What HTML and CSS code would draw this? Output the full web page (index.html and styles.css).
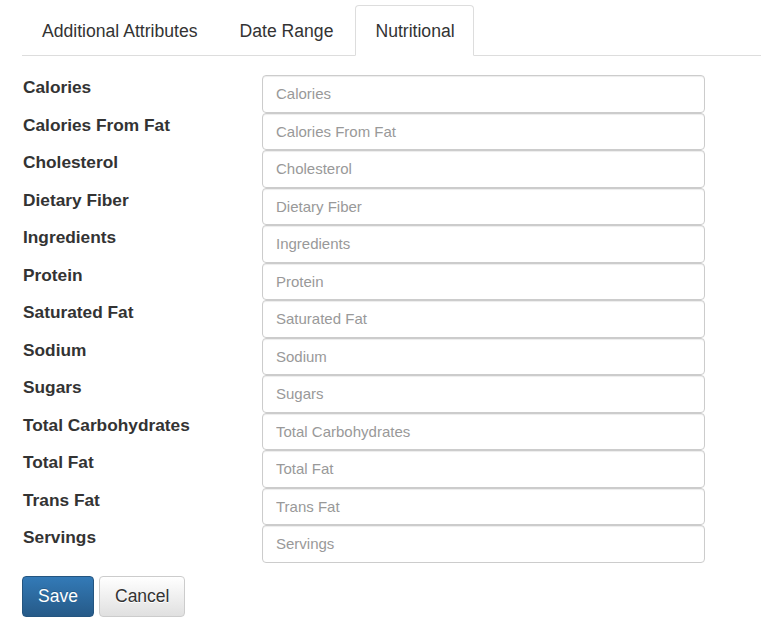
FILE: index.html
```html
<!doctype html>
<html>

<head>
    <meta charset="utf-8">
    <title>Nutritional</title>
    <link rel="stylesheet" href="styles.css">
</head>

<body>
    <ul class="tabs">
        <li><a href="#attributes">Additional Attributes</a></li>
        <li><a href="#dates">Date Range</a></li>
        <li class="active"><a href="#nutritional">Nutritional</a></li>
    </ul>

    <form class="nutrition">
        <div class="row">
            <label for="calories">Calories</label>
            <input id="calories" type="text" placeholder="Calories">
        </div>
        <div class="row">
            <label for="caloriesFat">Calories From Fat</label>
            <input id="caloriesFat" type="text" placeholder="Calories From Fat">
        </div>
        <div class="row">
            <label for="cholesterol">Cholesterol</label>
            <input id="cholesterol" type="text" placeholder="Cholesterol">
        </div>
        <div class="row">
            <label for="fiber">Dietary Fiber</label>
            <input id="fiber" type="text" placeholder="Dietary Fiber">
        </div>
        <div class="row">
            <label for="ingredients">Ingredients</label>
            <input id="ingredients" type="text" placeholder="Ingredients">
        </div>
        <div class="row">
            <label for="protein">Protein</label>
            <input id="protein" type="text" placeholder="Protein">
        </div>
        <div class="row">
            <label for="satFat">Saturated Fat</label>
            <input id="satFat" type="text" placeholder="Saturated Fat">
        </div>
        <div class="row">
            <label for="sodium">Sodium</label>
            <input id="sodium" type="text" placeholder="Sodium">
        </div>
        <div class="row">
            <label for="sugars">Sugars</label>
            <input id="sugars" type="text" placeholder="Sugars">
        </div>
        <div class="row">
            <label for="carbs">Total Carbohydrates</label>
            <input id="carbs" type="text" placeholder="Total Carbohydrates">
        </div>
        <div class="row">
            <label for="totalFat">Total Fat</label>
            <input id="totalFat" type="text" placeholder="Total Fat">
        </div>
        <div class="row">
            <label for="transFat">Trans Fat</label>
            <input id="transFat" type="text" placeholder="Trans Fat">
        </div>
        <div class="row">
            <label for="servings">Servings</label>
            <input id="servings" type="text" placeholder="Servings">
        </div>

        <div class="actions">
            <button type="submit" class="btn btn-primary">Save</button>
            <button type="button" class="btn btn-default">Cancel</button>
        </div>
    </form>
</body>

</html>
```

FILE: styles.css
```css
body {
    margin: 5px 0 0 22px;
    font-family: "Liberation Sans", Arial, sans-serif;
    color: #333;
    background: #fff;
}

/* tabs */
.tabs {
    display: flex;
    margin: 0;
    padding: 0;
    list-style: none;
    border-bottom: 1px solid #ddd;
}

.tabs li {
    margin-right: 2px;
    margin-bottom: -1px;
}

.tabs li a {
    display: block;
    height: 51px;
    box-sizing: border-box;
    padding: 14px 19px 0;
    font-size: 17.6px;
    line-height: 22px;
    color: #333;
    text-decoration: none;
    border: 1px solid transparent;
    border-radius: 4px 4px 0 0;
}

.tabs li.active a {
    padding-right: 18px;
    background: #fff;
    border-color: #ddd;
    border-bottom-color: #fff;
}

/* form */
.nutrition {
    width: 683px;
    padding-top: 19px;
}

.nutrition .row {
    display: flex;
    height: 37.5px;
}

.nutrition label {
    width: 239px;
    flex: none;
    padding: 1px 0 0 1px;
    font-size: 17.3px;
    font-weight: bold;
    line-height: 22px;
}

.nutrition input {
    width: 443px;
    height: 37.5px;
    box-sizing: border-box;
    margin: 0;
    padding: 0 13px;
    font-family: inherit;
    font-size: 15px;
    color: #555;
    border: 1px solid #ccc;
    border-radius: 4px;
    box-shadow: inset 0 1px 1px rgba(0, 0, 0, .075);
    outline: none;
}

.nutrition input::placeholder {
    color: #999;
}

/* buttons */
.actions {
    display: flex;
    gap: 5px;
    margin-top: 13px;
}

.btn {
    height: 41px;
    padding: 0 15px;
    font-family: inherit;
    font-size: 17.5px;
    border-radius: 4px;
    border: 1px solid;
    cursor: pointer;
}

.btn-primary {
    width: 72px;
    color: #fff;
    border-color: #245580;
    background: linear-gradient(to bottom, #337ab7 0, #265a88 100%);
    text-shadow: 0 -1px 0 rgba(0, 0, 0, .2);
}

.btn-default {
    width: 86px;
    color: #333;
    border-color: #ccc;
    background: linear-gradient(to bottom, #fff 0, #e0e0e0 100%);
    text-shadow: 0 1px 0 #fff;
}
```
